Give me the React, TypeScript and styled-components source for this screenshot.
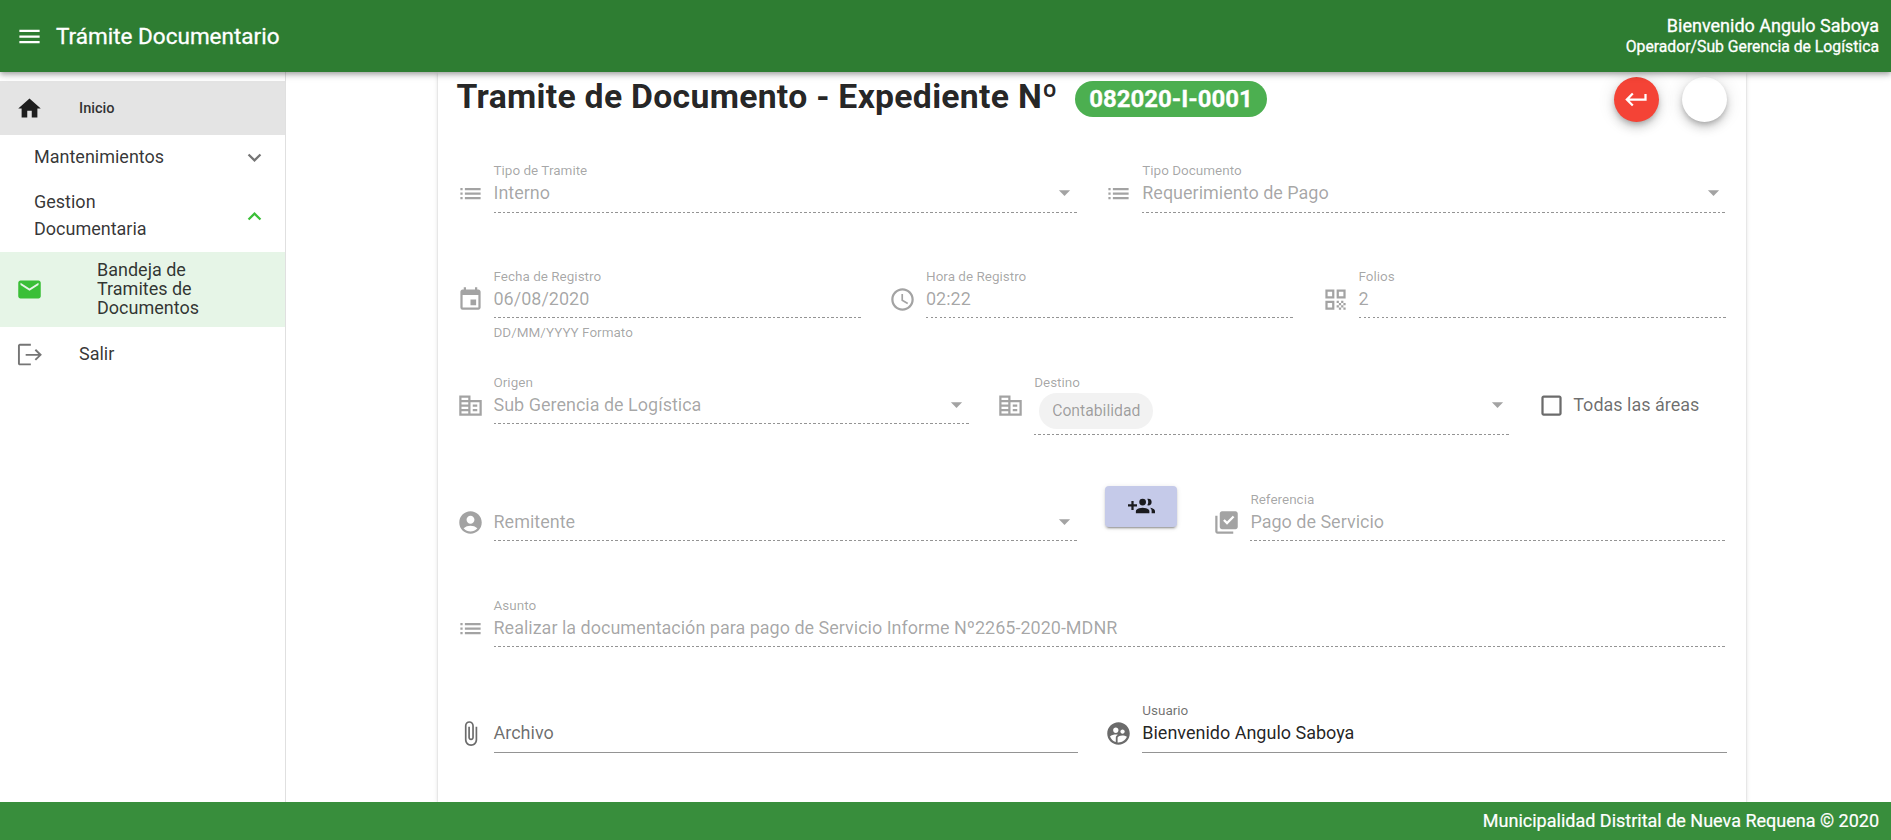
import React from 'react';
import styled, { createGlobalStyle, css } from 'styled-components';
import {
  MdMenu, MdHome, MdMail, MdKeyboardReturn, MdList, MdEvent, MdAccessTime, MdQrCode,
  MdAccountCircle, MdLibraryAddCheck, MdOutlineCheckBoxOutlineBlank,
  MdExpandMore, MdExpandLess, MdArrowDropDown, MdSupervisedUserCircle,
} from 'react-icons/md';

const Global = createGlobalStyle`
  *, *::before, *::after { box-sizing: border-box; }
  html, body { margin: 0; padding: 0; overflow: hidden; background: #fff; }
  body { font-family: Roboto, "Liberation Sans", sans-serif; font-size: 18px; color: rgba(0, 0, 0, .8); }
  svg { display: block; flex: none; }
`;

const Page = styled.div`
  height: 840px;
  display: flex;
  flex-direction: column;
  overflow: hidden;
`;

const TopBar = styled.header`
  height: 72px;
  flex: none;
  display: flex;
  align-items: center;
  justify-content: space-between;
  padding: 0 12px 0 16px;
  background: #2e7d32;
  color: #fff;
  -webkit-text-stroke: .3px #fff;
  position: relative;
  z-index: 2;
  box-shadow: 0 2px 4px -1px rgba(0, 0, 0, .2), 0 4px 5px rgba(0, 0, 0, .14), 0 1px 10px rgba(0, 0, 0, .12);
`;

const Brand = styled.div`
  display: flex;
  align-items: center;
  gap: 13px;
  font-size: 22.5px;
`;

const Welcome = styled.div`
  text-align: right;
  font-size: 18px;
  line-height: 21px;
`;

const Role = styled.div`
  font-size: 15.75px;
  line-height: 21px;
`;

const Body = styled.div`
  flex: 1;
  min-height: 0;
  display: flex;
`;

const Sidebar = styled.nav`
  width: 286px;
  flex: none;
  padding-top: 9px;
  border-right: 1px solid rgba(0, 0, 0, .12);
`;

const NavItem = styled.a<{ $tone?: 'active' | 'green'; $h: number; $gap: number }>`
  display: flex;
  align-items: center;
  height: ${p => p.$h}px;
  padding: 0 16px;
  gap: ${p => p.$gap}px;
  ${p => p.$tone === 'active' && css`
    background: #e4e4e4; font-size: 14.6px; font-weight: 500;
    svg { color: rgba(0, 0, 0, .87); }
  `}
  ${p => p.$tone === 'green' && css`background: #e6f5e7; line-height: 19px; svg { color: #3abf37; }`}
`;

const NavGroup = styled.div<{ $h: number }>`
  display: flex;
  align-items: center;
  justify-content: space-between;
  height: ${p => p.$h}px;
  padding: 0 17px 0 34px;
  line-height: 27px;
`;

const NavLabel = styled.span<{ $w?: number }>`
  padding-bottom: 2px;
  ${p => p.$w && css`width: ${p.$w}px;`}
`;

const Main = styled.main`
  flex: 1;
  display: flex;
  justify-content: center;
  padding-left: 6px;
  overflow: hidden;
`;

const Card = styled.section`
  width: 1308px;
  padding: 0 18.5px 0 19px;
  box-shadow: 0 3px 1px -2px rgba(0, 0, 0, .2), 0 2px 2px rgba(0, 0, 0, .14), 0 1px 5px rgba(0, 0, 0, .12);
`;

const Heading = styled.div`
  display: flex;
  align-items: center;
  height: 55px;
`;

const Title = styled.h1`
  margin: 0;
  font-size: 33.75px;
  font-weight: 700;
  letter-spacing: .28px;
  line-height: 40px;
  padding-bottom: 5px;
  white-space: nowrap;
  color: rgba(0, 0, 0, .87);
`;

const Badge = styled.span`
  margin: 0 0 1px 17px;
  height: 36px;
  line-height: 36px;
  padding: 0 14.5px;
  border-radius: 18px;
  background: #4caf50;
  color: #fff;
  -webkit-text-stroke: .3px #fff;
  font-weight: 700;
  font-size: 24px;
`;

const Actions = styled.div`
  margin-left: auto;
  display: flex;
  gap: 23px;
`;

const Fab = styled.button<{ $bg: string }>`
  width: 45px;
  height: 45px;
  border: 0;
  padding: 0;
  border-radius: 50%;
  display: grid;
  place-items: center;
  color: #fff;
  background: ${p => p.$bg};
  box-shadow: 0 3px 5px -1px rgba(0, 0, 0, .2), 0 6px 10px rgba(0, 0, 0, .14), 0 1px 18px rgba(0, 0, 0, .12);
`;

const Form = styled.div`
  display: grid;
  grid-template-columns: repeat(12, minmax(0, 1fr));
  column-gap: 27px;
  grid-template-rows: 105.75px 105.75px 117px 105.75px 105.75px 105.75px;
  padding-top: 34.3px;
`;

const Cell = styled.div<{ $span: number; $dim?: boolean }>`
  grid-column: span ${p => p.$span};
  display: flex;
  align-items: flex-start;
  gap: 10px;
  color: ${p => (p.$dim === false ? 'rgba(0,0,0,.58)' : 'rgba(0,0,0,.36)')};
`;

const IconSlot = styled.span`
  padding-top: 19px;
`;

const Control = styled.div`
  flex: 1;
  min-width: 0;
`;

const Label = styled.div`
  height: 18px;
  line-height: 18px;
  font-size: 13.5px;
`;

const Value = styled.div<{ $solid?: boolean; $h?: number; $strong?: boolean }>`
  height: ${p => p.$h ?? 33.3}px;
  display: flex;
  justify-content: space-between;
  line-height: 28px;
  color: ${p => (p.$strong ? 'rgba(0,0,0,.87)' : 'inherit')};
  ${p => p.$solid
    ? css`border-bottom: 1px solid rgba(0, 0, 0, .42);`
    : css`
      background: repeating-linear-gradient(to right, rgba(0, 0, 0, .42) 0 2.25px, transparent 2.25px 4.5px) left bottom / 100% 1px no-repeat;
    `}
`;

const Hint = styled.div`
  font-size: 13.5px;
  line-height: 14px;
  padding-top: 7px;
`;

const Chip = styled.span`
  margin: 2.2px 0 0 5px;
  height: 36px;
  line-height: 36px;
  padding: 0 13px;
  border-radius: 18px;
  background: #f2f2f2;
  font-size: 15.75px;
`;

const CheckLabel = styled.span`
  line-height: 27px;
  padding-top: 18.5px;
  margin-left: -1.5px;
`;

const AddButton = styled.button`
  margin-top: -3.8px;
  width: 72px;
  height: 41px;
  border: 0;
  border-radius: 4px;
  padding: 0;
  display: grid;
  place-items: center;
  background: #c5cae9;
  color: rgba(0, 0, 0, .87);
  box-shadow: 0 3px 1px -2px rgba(0, 0, 0, .2), 0 2px 2px rgba(0, 0, 0, .14), 0 1px 5px rgba(0, 0, 0, .12);
`;

const Footer = styled.footer`
  height: 38px;
  flex: none;
  position: relative;
  z-index: 1;
  background: #388e3c;
  color: #fff;
  -webkit-text-stroke: .2px #fff;
  text-align: right;
  line-height: 37px;
  padding-right: 12px;
`;

const Glyph = ({ d, size = 27 }: { d: string; size?: number }) => (
  <svg width={size} height={size} viewBox="0 0 24 24" fill="currentColor"><path fillRule="evenodd" d={d} /></svg>
);

const LogoutIcon = () => (
  <svg width={27} height={27} viewBox="0 0 24 24" fill="none" stroke="#757575" strokeWidth="1.7">
    <path d="M13.2 3.4H3.4a.8.8 0 0 0-.8.8v15.8a.8.8 0 0 0 .8.8h9.8" />
    <path d="M8.6 12.3h13.2M17.2 7.8l4.6 4.5-4.6 4.5" />
  </svg>
);

const buildingPath = 'M12 7V3H2v18h20V7H12zM10 19H4v-2h6v2zM10 15H4v-2h6v2zM10 11H4V9h6v2zM10 7H4V5h6v2zM20 19h-8V9h8v10zM18 11h-4v2h4v-2zM18 15h-4v2h4v-2z';
const clipPath = 'M16.5 6v11.5c0 2.21-1.79 4-4 4s-4-1.79-4-4V5c0-1.38 1.12-2.5 2.5-2.5s2.5 1.12 2.5 2.5v10.5c0 .55-.45 1-1 1s-1-.45-1-1V6H10v9.5c0 1.38 1.12 2.5 2.5 2.5s2.5-1.12 2.5-2.5V5c0-2.21-1.79-4-4-4S7 2.79 7 5v12.5c0 3.04 2.46 5.5 5.5 5.5s5.5-2.46 5.5-5.5V6h-1.5z';
const groupAddPath = 'M13 13C11 13 7 14 7 16V18H19V16C19 14 15 13 13 13M19.62 13.16C20.45 13.88 21 14.82 21 16V18H24V16C24 14.46 21.63 13.47 19.62 13.16M13 11A3 3 0 0 0 16 8A3 3 0 0 0 13 5A3 3 0 0 0 10 8A3 3 0 0 0 13 11M18 11A3 3 0 0 0 21 8A3 3 0 0 0 18 5C17.68 5 17.37 5.05 17.08 5.14C17.65 5.95 18 6.94 18 8C18 9.06 17.65 10.04 17.08 10.86C17.37 10.95 17.68 11 18 11M8 10H5V7H3V10H0V12H3V15H5V12H8V10Z';

type FieldProps = {
  span: number; icon: React.ReactNode; label?: string; value: string;
  select?: boolean; hint?: string; enabled?: boolean; strong?: boolean;
};

const Field = ({ span, icon, label, value, select, hint, enabled, strong }: FieldProps) => (
  <Cell $span={span} $dim={!enabled}>
    <IconSlot>{icon}</IconSlot>
    <Control>
      <Label>{label}</Label>
      <Value $solid={enabled} $strong={strong}>
        <span>{value}</span>
        {select && <MdArrowDropDown size={27} />}
      </Value>
      {hint && <Hint>{hint}</Hint>}
    </Control>
  </Cell>
);

export default function App() {
  return (
    <Page>
      <Global />
      <TopBar>
        <Brand><MdMenu size={27} /><span>Trámite Documentario</span></Brand>
        <Welcome>Bienvenido Angulo Saboya<Role>Operador/Sub Gerencia de Logística</Role></Welcome>
      </TopBar>
      <Body>
        <Sidebar>
          <NavItem $tone="active" $h={54} $gap={36}><MdHome size={27} /><span>Inicio</span></NavItem>
          <NavGroup $h={45}><NavLabel>Mantenimientos</NavLabel><MdExpandMore size={27} color="#757575" /></NavGroup>
          <NavGroup $h={72}><NavLabel $w={130}>Gestion Documentaria</NavLabel><MdExpandLess size={27} color="#3abf37" /></NavGroup>
          <NavItem $tone="green" $h={75} $gap={54}><MdMail size={27} /><NavLabel $w={120}>Bandeja de Tramites de Documentos</NavLabel></NavItem>
          <NavItem $h={54} $gap={36}><LogoutIcon /><NavLabel>Salir</NavLabel></NavItem>
        </Sidebar>
        <Main>
          <Card>
            <Heading>
              <Title>Tramite de Documento - Expediente Nº</Title>
              <Badge>082020-I-0001</Badge>
              <Actions>
                <Fab $bg="#f44336"><MdKeyboardReturn size={27} /></Fab>
                <Fab $bg="#fff" />
              </Actions>
            </Heading>
            <Form>
              <Field span={6} icon={<MdList size={27} />} label="Tipo de Tramite" value="Interno" select />
              <Field span={6} icon={<MdList size={27} />} label="Tipo Documento" value="Requerimiento de Pago" select />

              <Field span={4} icon={<MdEvent size={27} />} label="Fecha de Registro" value="06/08/2020" hint="DD/MM/YYYY Formato" />
              <Field span={4} icon={<MdAccessTime size={27} />} label="Hora de Registro" value="02:22" />
              <Field span={4} icon={<MdQrCode size={27} />} label="Folios" value="2" />

              <Field span={5} icon={<Glyph d={buildingPath} />} label="Origen" value="Sub Gerencia de Logística" select />
              <Cell $span={5}>
                <IconSlot><Glyph d={buildingPath} /></IconSlot>
                <Control>
                  <Label>Destino</Label>
                  <Value $h={44.3}><Chip>Contabilidad</Chip><MdArrowDropDown size={27} /></Value>
                </Control>
              </Cell>
              <Cell $span={2} $dim={false}>
                <IconSlot><MdOutlineCheckBoxOutlineBlank size={27} /></IconSlot>
                <CheckLabel>Todas las áreas</CheckLabel>
              </Cell>

              <Field span={6} icon={<MdAccountCircle size={27} />} value="Remitente" select />
              <Cell $span={1}><AddButton><Glyph d={groupAddPath} /></AddButton></Cell>
              <Field span={5} icon={<MdLibraryAddCheck size={27} />} label="Referencia" value="Pago de Servicio" />

              <Field span={12} icon={<MdList size={27} />} label="Asunto" value="Realizar la documentación para pago de Servicio Informe Nº2265-2020-MDNR" />

              <Field span={6} icon={<Glyph d={clipPath} />} value="Archivo" enabled />
              <Field span={6} icon={<MdSupervisedUserCircle size={27} />} label="Usuario" value="Bienvenido Angulo Saboya" enabled strong />
            </Form>
          </Card>
        </Main>
      </Body>
      <Footer>Municipalidad Distrital de Nueva Requena © 2020</Footer>
    </Page>
  );
}
